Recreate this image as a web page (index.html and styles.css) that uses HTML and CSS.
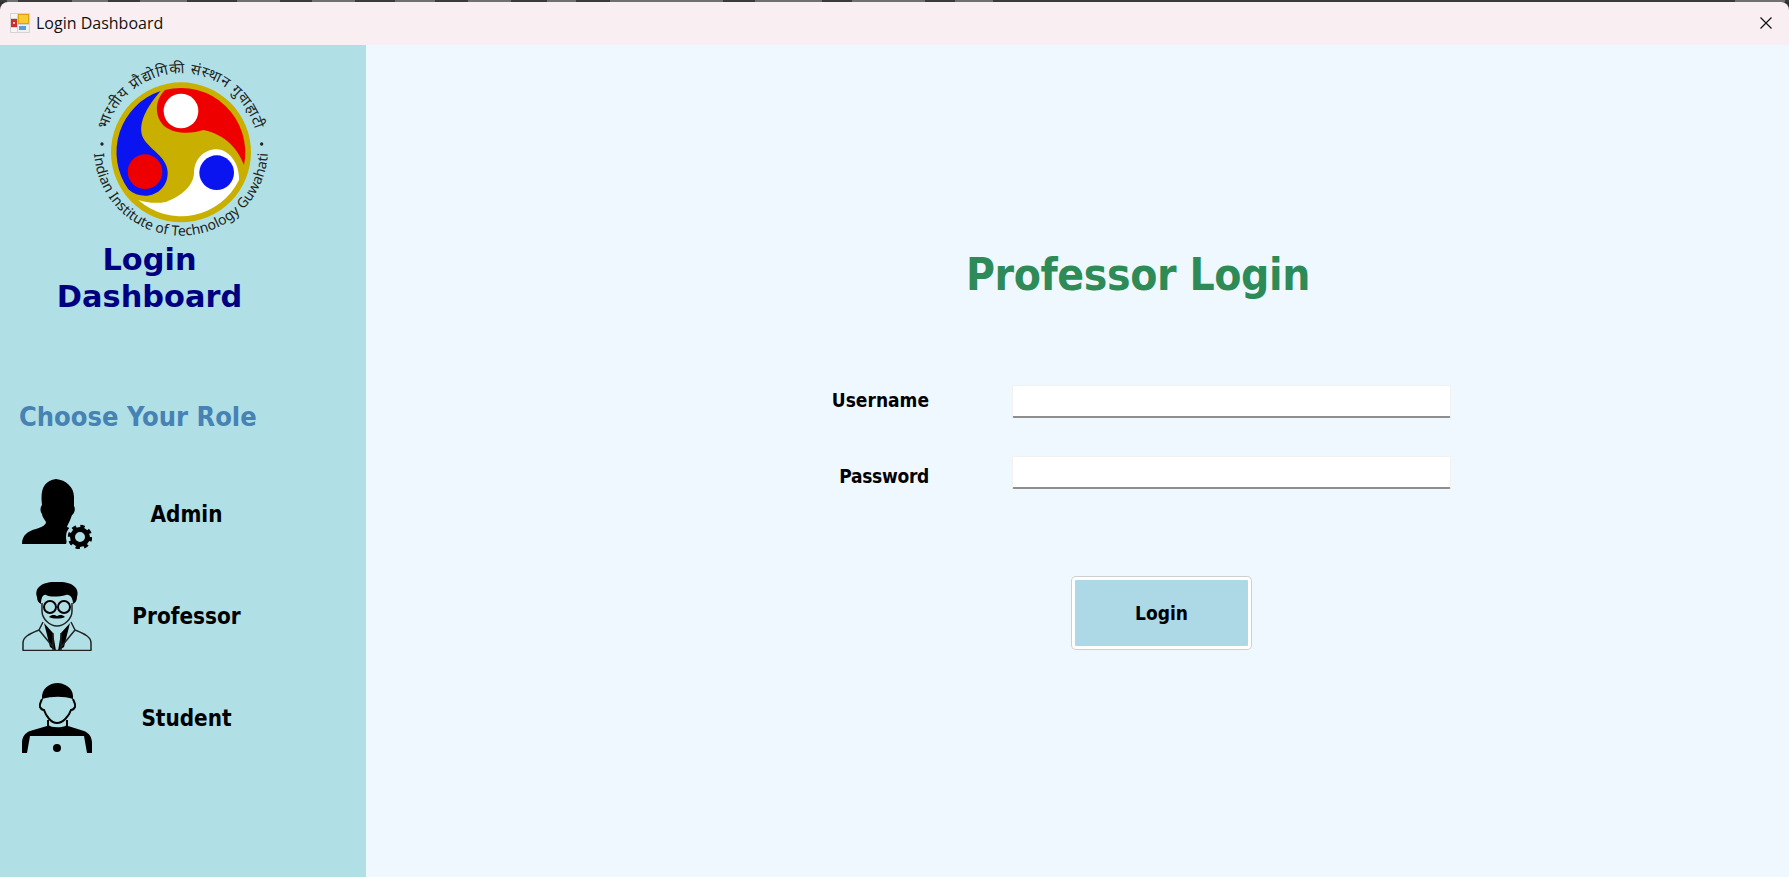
FILE: index.html
```html
<!DOCTYPE html>
<html lang="en">
<head>
<meta charset="utf-8">
<title>Login Dashboard</title>
<link rel="stylesheet" href="styles.css">
</head>
<body>
<div class="backdrop-strip"></div>
<div class="window">
  <header class="titlebar">
    <svg class="app-icon" viewBox="0 0 20 20">
      <rect width="20" height="20" fill="#d4d4d4"/>
      <rect x="1" y="1" width="6" height="4" fill="#f5f5f5"/>
      <rect x="1" y="6" width="6" height="8" fill="#c9302c"/>
      <rect x="3" y="9" width="2" height="2" fill="#f4c0b8"/>
      <rect x="1" y="15" width="6" height="4" fill="#f5f5f5"/>
      <rect x="8" y="1" width="11" height="10" fill="#e0a010"/>
      <rect x="9" y="2" width="9" height="8" fill="#f8cb30"/>
      <rect x="8" y="12" width="11" height="7" fill="#f0f0f0"/>
      <rect x="9" y="13" width="7" height="4" fill="#5b9bdc"/>
    </svg>
    <span class="window-title">Login Dashboard</span>
    <svg class="close-icon" viewBox="0 0 12 12"><path d="M0.5 0.5 L11.5 11.5 M11.5 0.5 L0.5 11.5"/></svg>
  </header>
  <div class="content">
    <aside class="sidebar">
      <svg class="logo" viewBox="60 30 555 540">
        <defs>
          <path id="arc-top" d="M 103 300 A 230 230 0 0 1 563 300"/>
          <path id="arc-bottom" d="M 72 296 A 261 261 0 0 0 594 296"/>
        </defs>
        <circle cx="333" cy="307" r="210" fill="#c9b000"/>
        <path fill="#ee0000" d="M285 120 A193 193 0 0 1 522 345 C505 300 470 255 400 240 C370 250 320 255 285 230 C255 205 250 155 285 120Z"/>
        <path fill="#0a14f0" d="M272 123 A193 193 0 0 0 175 418 C190 432 208 437 225 437 C265 437 295 405 293 365 C290 320 240 300 220 265 C200 225 230 170 272 123Z"/>
        <path fill="#fff" d="M205 450 A193 193 0 0 0 507 390 C510 340 475 298 440 298 C400 298 372 330 372 370 C370 410 330 440 290 455 C260 462 230 458 205 450Z"/>
        <circle cx="333" cy="183" r="52" fill="#fff"/>
        <circle cx="225" cy="365" r="52" fill="#ee0000"/>
        <circle cx="440" cy="368" r="52" fill="#0a14f0"/>
        <circle class="ring-dot" cx="96" cy="282" r="5"/>
        <circle class="ring-dot" cx="575" cy="282" r="5"/>
        <text class="ring-text ring-hindi"><textPath href="#arc-top" startOffset="50%">भारतीय प्रौद्योगिकी संस्थान गुवाहाटी</textPath></text>
        <text class="ring-text"><textPath href="#arc-bottom" startOffset="50%">Indian Institute of Technology Guwahati</textPath></text>
      </svg>
      <h1 class="brand">Login<br>Dashboard</h1>
      <h2 class="role-heading">Choose Your Role</h2>
      <ul class="roles">
        <li class="role">
          <svg class="role-icon" viewBox="0 0 70 70">
            <path d="M34 0C44 1 52 8 52 18L52 27C54 30 52 35 50 36C48 42 46 45 45 48L50 50L47 55L44 65L0 65C0 56 6 52 14 50C20 48 24 46 24 43C22 40 20 37 20 35C18 33 18 28 20 26C18 10 22 2 34 0Z"/>
            <circle class="gear-halo" cx="58" cy="58" r="14"/>
            <circle class="gear-ring" cx="58" cy="58" r="7.5"/>
            <circle class="gear-teeth" cx="58" cy="58" r="10.5"/>
          </svg>
          <span class="role-label">Admin</span>
        </li>
        <li class="role">
          <svg class="role-icon" viewBox="0 0 70 70">
            <path d="M15 16C12 7 20 0 35 1C50 0 58 7 55 16C55 20 53 22 51 23C51 17 48 13 44 14C36 16 28 16 24 14C21 13 19 17 19 23C17 22 15 20 15 16Z"/>
            <path class="line" d="M20 22L20 30C20 38 28 45 35 45C42 45 50 38 50 30L50 22"/>
            <circle class="line thick" cx="28" cy="26" r="6"/>
            <circle class="line thick" cx="42" cy="26" r="6"/>
            <path d="M27 36C30 33 33 34 35 35C37 34 40 33 43 36C39 38 31 38 27 36Z"/>
            <path d="M22 42L31 52L34 70L28 66ZM48 42L39 52L36 70L42 66Z"/>
            <path class="line" d="M1 69.500L1 62C1 56 7 53 17 49L21 41M69 69.500L69 62C69 56 63 53 53 49L49 41M17 49L31 66M53 49L39 66M0.500 69.500L69.500 69.500M31 52L31 69M39 52L39 69"/>
          </svg>
          <span class="role-label">Professor</span>
        </li>
        <li class="role">
          <svg class="role-icon" viewBox="0 0 70 70">
            <path d="M20 16C19 6 27 0 36 0C46 1 52 7 51 16C42 13 30 13 20 16Z"/>
            <path class="line thick" d="M20 16C19 19 17 21 18 24C19 26 21 27 22 27C24 33 29 40 35 40C41 40 47 33 49 27C50 27 52 26 53 24C54 21 52 19 51 16M26 37L26 43C29 46 41 46 45 43L45 37"/>
            <path d="M25 43C32 47 39 47 46 43L62 48C67 50 70 54 70 60L70 70L65 70L62 53L8 53L5 70L0 70L0 60C0 54 3 50 8 48Z"/>
            <circle cx="35" cy="65" r="4"/>
          </svg>
          <span class="role-label">Student</span>
        </li>
      </ul>
    </aside>
    <main class="panel">
      <h2 class="panel-title">Professor Login</h2>
      <form class="login-form">
        <label class="field-label field-label-high" for="username">Username</label>
        <input class="field-input" id="username" type="text">
        <label class="field-label field-label-low" for="password">Password</label>
        <input class="field-input" id="password" type="password">
      </form>
      <button class="login-button" type="button">Login</button>
    </main>
  </div>
</div>
</body>
</html>
```

FILE: styles.css
```css
* { box-sizing: border-box; }
html, body { margin: 0; height: 100%; overflow: hidden; }
body {
  background: #2e2e2e;
  font-family: "DejaVu Sans", "Liberation Sans", sans-serif;
  font-stretch: condensed;
  display: flex;
  flex-direction: column;
}
.backdrop-strip {
  height: 2px;
  flex: none;
  background: linear-gradient(to right,
    #3a3a3a 7px, #707070 7px, #707070 18px, #3a3a3a 18px,
    #3a3a3a 72px, #707070 72px, #707070 108px, #3a3a3a 108px,
    #3a3a3a 140px, #707070 140px, #707070 187px, #3a3a3a 187px,
    #3a3a3a 237px, #707070 237px, #707070 280px, #3a3a3a 280px,
    #3a3a3a 312px, #707070 312px, #707070 355px, #3a3a3a 355px,
    #3a3a3a 395px, #707070 395px, #707070 435px, #3a3a3a 435px,
    #3a3a3a 468px, #707070 468px, #707070 511px, #3a3a3a 511px,
    #3a3a3a 547px, #707070 547px, #707070 576px, #3a3a3a 576px,
    #3a3a3a 610px, #707070 610px, #707070 723px, #3a3a3a 723px,
    #3a3a3a 755px, #707070 755px, #707070 822px, #3a3a3a 822px,
    #3a3a3a 852px, #707070 852px, #707070 925px, #3a3a3a 925px,
    #3a3a3a 955px, #707070 955px, #707070 993px, #3a3a3a 993px,
    #3a3a3a 1735px, #707070 1735px, #707070 1785px, #3a3a3a 1785px);
}
.window {
  flex: 1;
  min-height: 0;
  display: flex;
  flex-direction: column;
  border-radius: 8px 8px 0 0;
  overflow: hidden;
}
.titlebar {
  height: 43px;
  flex: none;
  background: #f9eff2;
  display: flex;
  align-items: center;
  padding: 0 17px 2px 10px;
}
.app-icon { width: 20px; height: 20px; flex: none; }
.window-title {
  margin-left: 6px;
  font-family: "Open Sans", "Noto Sans", sans-serif;
  font-stretch: normal;
  font-size: 16px;
  color: #111;
}
.close-icon { width: 12px; height: 12px; margin-left: auto; }
.close-icon path { stroke: #111; stroke-width: 1.2; fill: none; }
.content { flex: 1; min-height: 0; display: flex; }
.sidebar {
  width: 366px;
  flex: none;
  background: #b0e0e6;
  display: flex;
  flex-direction: column;
  padding-top: 15px;
}
.logo { width: 185px; height: 180px; margin-left: 90px; display: block; overflow: visible; }
.ring-text {
  font-family: "Noto Sans", "Noto Sans CJK SC", sans-serif;
  font-stretch: normal;
  font-size: 42px;
  text-anchor: middle;
  fill: #222;
}
.ring-hindi { font-size: 44px; letter-spacing: 2.500px; }
.ring-dot { fill: #222; }
.brand {
  margin: 2px 0 0;
  width: 298px;
  padding-left: 1px;
  text-align: center;
  font-stretch: normal;
  font-weight: 700;
  font-size: 30.400px;
  line-height: 36.500px;
  color: #000080;
}
.role-heading {
  margin: 84px 0 0 19px;
  font-weight: 700;
  font-size: 27px;
  line-height: 36px;
  color: #4682b4;
}
.roles { list-style: none; margin: 44px 0 0; padding: 0 0 0 22px; width: 281px; }
.role {
  display: grid;
  grid-template-columns: 70px 1fr;
  align-items: center;
  height: 70px;
  margin-bottom: 32px;
}
.role-icon { width: 70px; height: 70px; display: block; }
.role-icon .line { fill: none; stroke: #222; stroke-width: 1.500; }
.role-icon .thick { stroke: #000; stroke-width: 2; }
.gear-halo { fill: #b0e0e6; }
.gear-ring { fill: none; stroke: #000; stroke-width: 5; }
.gear-teeth { fill: none; stroke: #000; stroke-width: 3.500; stroke-dasharray: 4.200 4.050; }
.role-label { text-align: center; font-weight: 700; font-size: 22.300px; color: #000; }
.panel { flex: 1; background: #f0f8ff; position: relative; }
.panel-title {
  margin: 0;
  padding: 198px 0 0 600px;
  font-weight: 700;
  font-size: 44px;
  letter-spacing: -0.400px;
  line-height: 64px;
  color: #2e8b57;
}
.login-form {
  margin: 78px 0 0 420px;
  display: grid;
  grid-template-columns: 143px 439px;
  column-gap: 83px;
  row-gap: 38px;
  align-items: center;
}
.field-label { text-align: right; font-weight: 700; font-size: 19px; line-height: 24px; color: #000; }
.field-label-high { margin-bottom: 4px; }
.field-label-low { margin-top: 7px; letter-spacing: -0.300px; }
.field-input {
  height: 33px;
  padding: 0 4px;
  background: #fff;
  border: 1px solid #f1f1f1;
  border-bottom: 2px solid #8e8e8e;
  border-radius: 2px;
  outline: none;
}
.login-button {
  display: block;
  margin: 88px 0 0 706px;
  width: 179px;
  height: 72px;
  background: #add8e6;
  border: 3px solid #fff;
  border-radius: 4px;
  box-shadow: 0 0 0 1px #cfcfcf;
  font-family: inherit;
  font-stretch: inherit;
  font-weight: 700;
  font-size: 19px;
  color: #000;
}
```
